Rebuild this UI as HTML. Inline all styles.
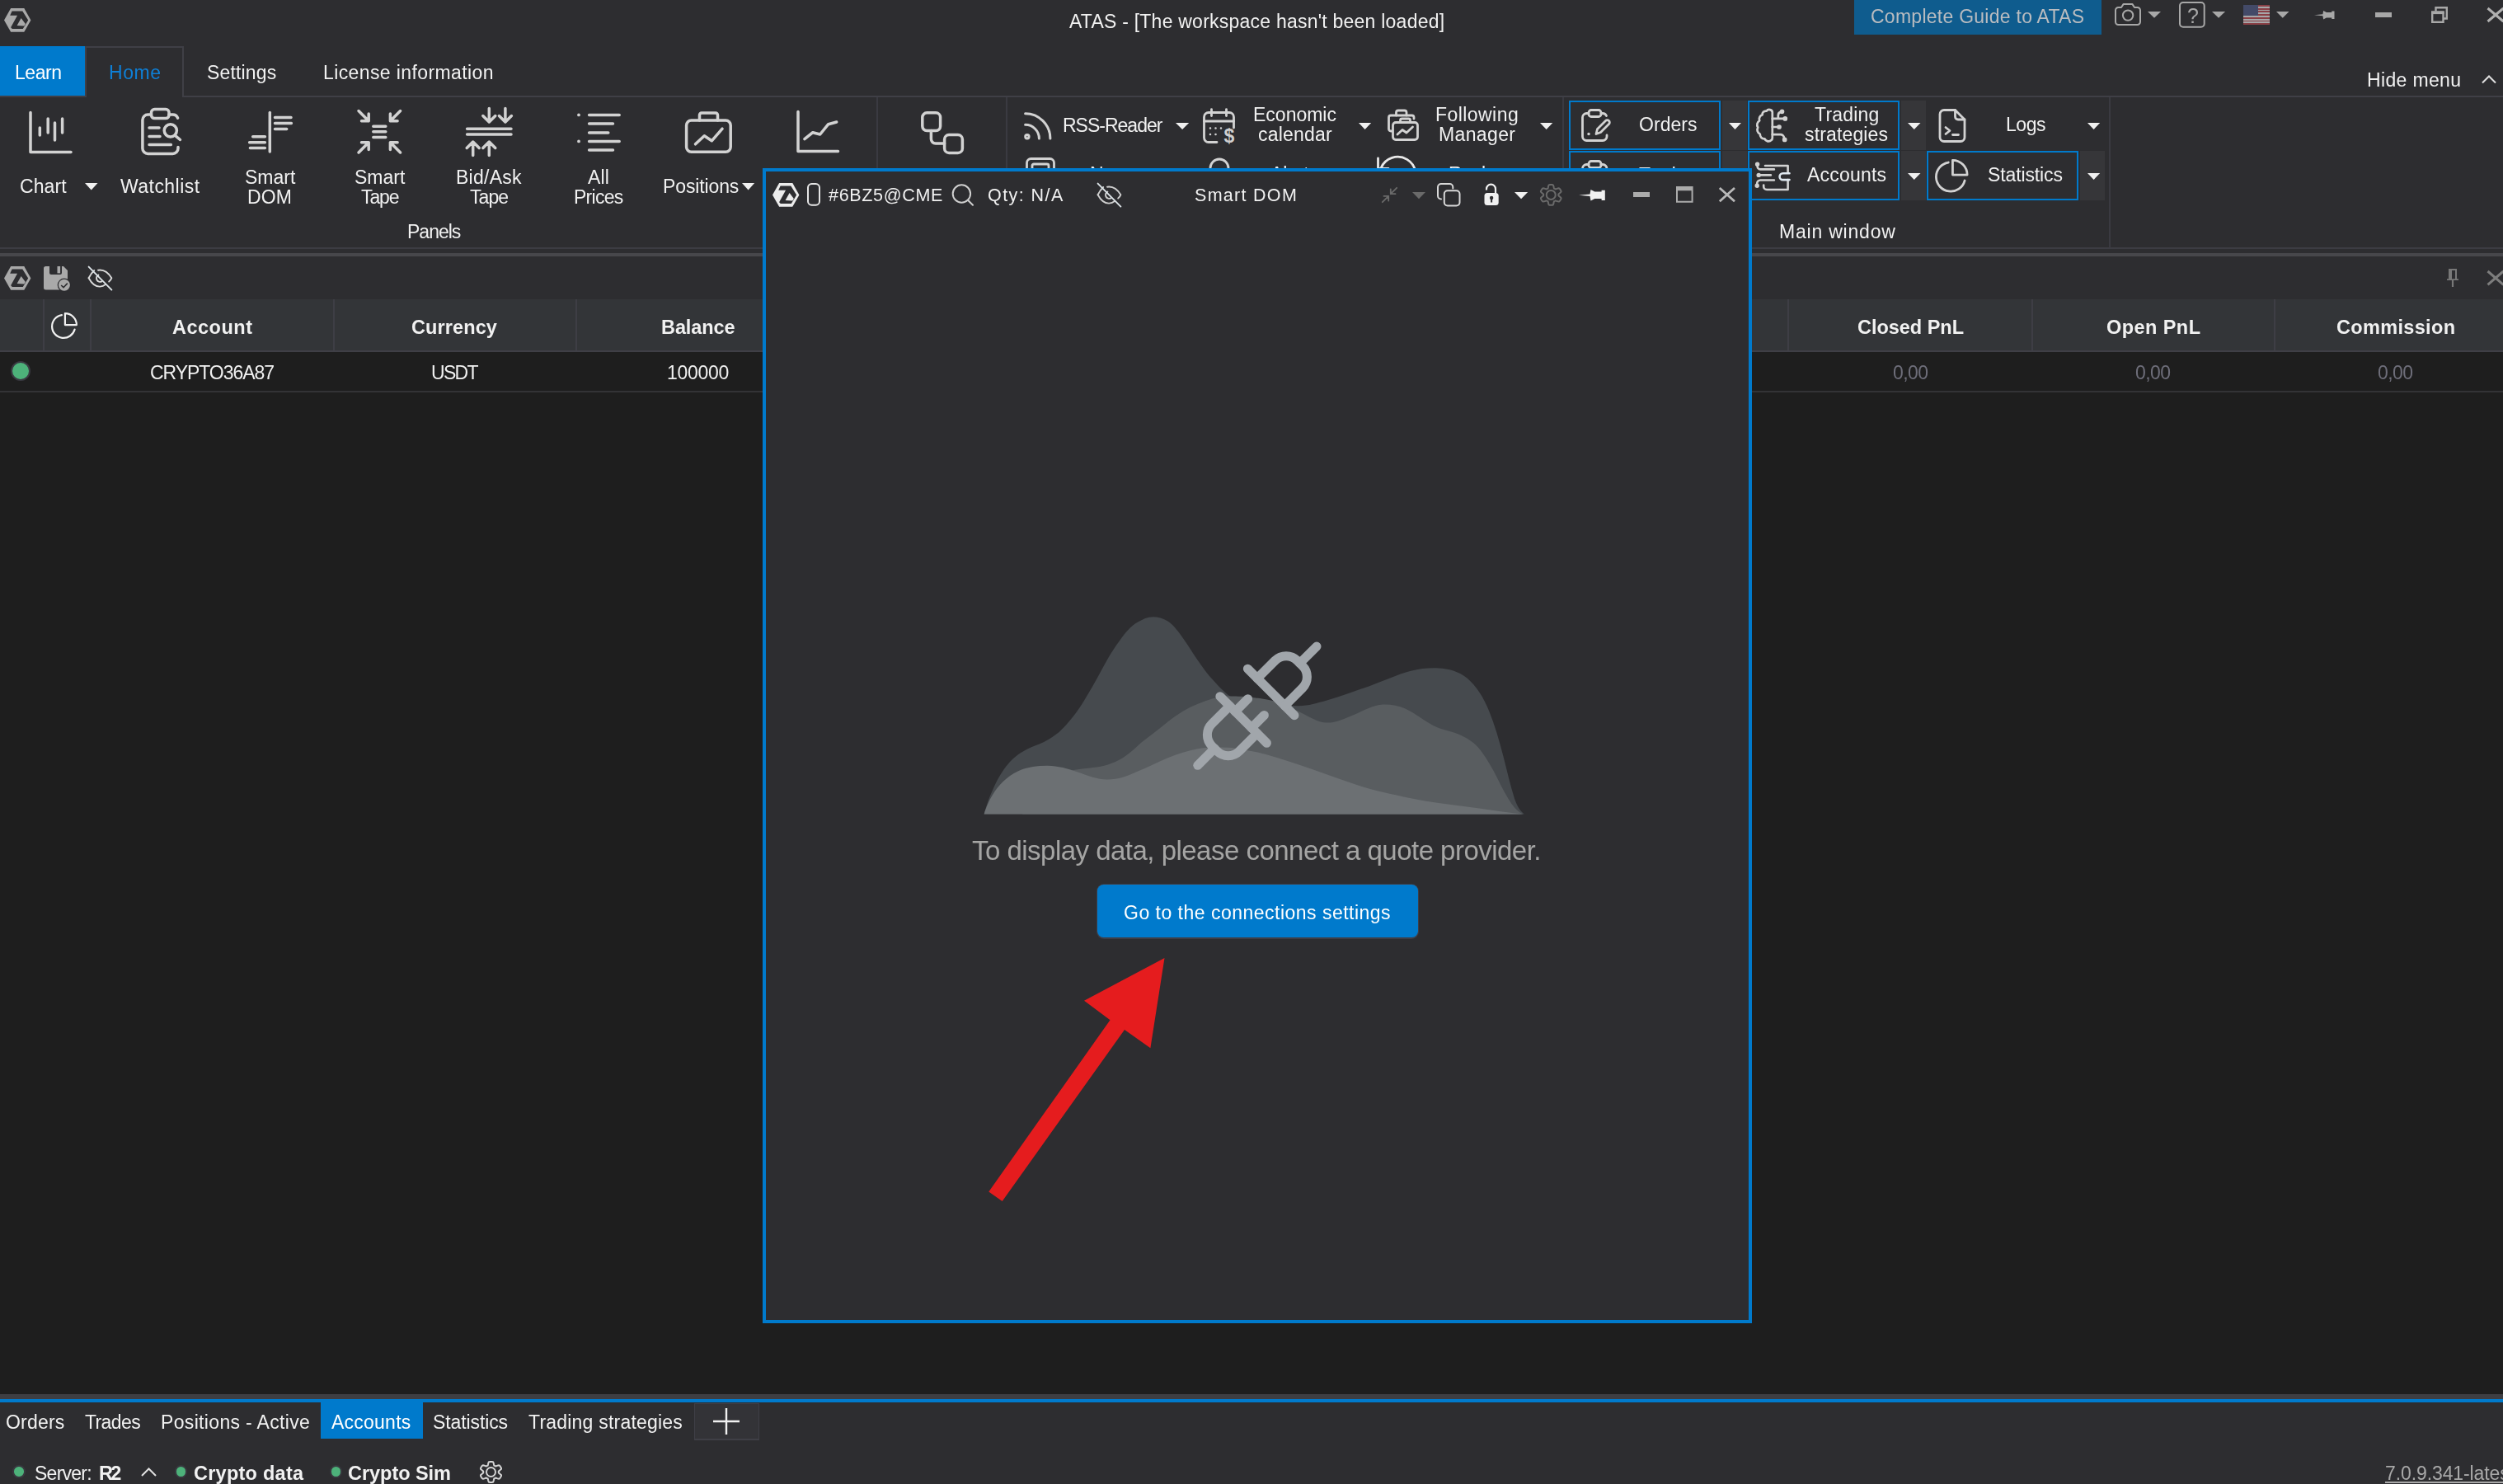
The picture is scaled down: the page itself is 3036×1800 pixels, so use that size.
<!DOCTYPE html>
<html><head><meta charset="utf-8"><title>ATAS</title><style>
html,body{margin:0;padding:0;background:#2d2d30;}
body{width:3036px;height:1800px;position:relative;overflow:hidden;font-family:"Liberation Sans",sans-serif;}
body div,body span,body svg{position:absolute;display:block;box-sizing:content-box;}
span{white-space:pre;line-height:1;will-change:transform;}
svg{overflow:visible;}
</style></head><body>
<div style="left:2249px;top:0px;width:300px;height:42px;background:#0f5c8e;"></div>
<span style="left:2269.0px;top:8.5px;font-size:23px;letter-spacing:0.26px;color:#b9bcc0;">Complete Guide to ATAS</span>
<span style="left:1297.0px;top:14.5px;font-size:23px;letter-spacing:0.23px;color:#f1f1f1;">ATAS - [The workspace hasn&#x27;t been loaded]</span>
<div style="left:0px;top:56px;width:103px;height:60px;background:#007acc;"></div>
<span style="left:18.0px;top:76.5px;font-size:23px;letter-spacing:-0.45px;color:#ffffff;">Learn</span>
<div style="left:103px;top:56px;width:120px;height:2px;background:#3f3f46;"></div>
<div style="left:221px;top:56px;width:2px;height:62px;background:#3f3f46;"></div>
<div style="left:103px;top:56px;width:2px;height:62px;background:#3f3f46;"></div>
<div style="left:0px;top:116px;width:105px;height:2px;background:#3f3f46;"></div>
<div style="left:221px;top:116px;width:2815px;height:2px;background:#3f3f46;"></div>
<span style="left:132.0px;top:76.5px;font-size:23px;letter-spacing:0.55px;color:#0e7fd6;">Home</span>
<span style="left:251.3px;top:76.5px;font-size:23px;letter-spacing:0.17px;color:#f1f1f1;">Settings</span>
<span style="left:392.2px;top:76.5px;font-size:23px;letter-spacing:0.39px;color:#f1f1f1;">License information</span>
<span style="left:2871.0px;top:86.1px;font-size:23px;letter-spacing:0.35px;color:#f1f1f1;">Hide menu</span>
<svg style="left:3010px;top:91px;" width="18" height="10" viewBox="0 0 18 10"><path d="M1 9.5L9 1.5L17 9.5" fill="none" stroke="#e0e0e0" stroke-width="2"/></svg>
<div style="left:0px;top:300px;width:3036px;height:2px;background:#3c3c43;"></div>
<div style="left:0px;top:307px;width:3036px;height:4px;background:#47474b;"></div>
<div style="left:1063px;top:118px;width:2px;height:182px;background:#3a3a41;"></div>
<div style="left:1220px;top:118px;width:2px;height:182px;background:#3a3a41;"></div>
<div style="left:1895px;top:118px;width:2px;height:182px;background:#3a3a41;"></div>
<div style="left:2558px;top:118px;width:2px;height:182px;background:#3a3a41;"></div>
<span style="left:23.7px;top:215.0px;font-size:23px;letter-spacing:0.09px;color:#f1f1f1;">Chart</span>
<svg style="left:102.5px;top:222.4px;" width="15.5" height="8.599999999999994" viewBox="0 0 15.5 8.599999999999994"><path d="M0 0H15.5L7.75 8.599999999999994Z" fill="#f1f1f1"/></svg>
<span style="left:146.0px;top:215.0px;font-size:23px;letter-spacing:0.45px;color:#f1f1f1;">Watchlist</span>
<span style="left:296.6px;top:203.7px;font-size:23px;letter-spacing:-0.01px;color:#f1f1f1;">Smart</span>
<span style="left:299.8px;top:227.5px;font-size:23px;letter-spacing:0.17px;color:#f1f1f1;">DOM</span>
<span style="left:429.6px;top:203.7px;font-size:23px;letter-spacing:-0.01px;color:#f1f1f1;">Smart</span>
<span style="left:437.7px;top:227.5px;font-size:23px;letter-spacing:-1.12px;color:#f1f1f1;">Tape</span>
<span style="left:553.2px;top:203.7px;font-size:23px;letter-spacing:0.27px;color:#f1f1f1;">Bid/Ask</span>
<span style="left:569.8px;top:227.5px;font-size:23px;letter-spacing:-0.92px;color:#f1f1f1;">Tape</span>
<span style="left:712.7px;top:203.7px;font-size:23px;letter-spacing:0.17px;color:#f1f1f1;">All</span>
<span style="left:696.0px;top:227.5px;font-size:23px;letter-spacing:-0.74px;color:#f1f1f1;">Prices</span>
<span style="left:803.9px;top:215.0px;font-size:23px;letter-spacing:-0.12px;color:#f1f1f1;">Positions</span>
<svg style="left:900.3px;top:222.4px;" width="15.200000000000045" height="8.599999999999994" viewBox="0 0 15.200000000000045 8.599999999999994"><path d="M0 0H15.200000000000045L7.600000000000023 8.599999999999994Z" fill="#f1f1f1"/></svg>
<span style="left:494.0px;top:270.1px;font-size:23px;letter-spacing:-1.00px;color:#f1f1f1;">Panels</span>
<span style="left:2158.0px;top:270.0px;font-size:23px;letter-spacing:0.79px;color:#f1f1f1;">Main window</span>
<span style="left:1289.0px;top:140.5px;font-size:23px;letter-spacing:-1.00px;color:#f1f1f1;">RSS-Reader</span>
<svg style="left:1425.6px;top:149px;" width="16.200000000000045" height="8" viewBox="0 0 16.200000000000045 8"><path d="M0 0H16.200000000000045L8.100000000000023 8Z" fill="#f1f1f1"/></svg>
<span style="left:1520.0px;top:127.9px;font-size:23px;letter-spacing:0.00px;color:#f1f1f1;">Economic</span>
<span style="left:1526.0px;top:152.1px;font-size:23px;letter-spacing:0.20px;color:#f1f1f1;">calendar</span>
<svg style="left:1647.6px;top:149px;" width="15.200000000000045" height="8" viewBox="0 0 15.200000000000045 8"><path d="M0 0H15.200000000000045L7.600000000000023 8Z" fill="#f1f1f1"/></svg>
<span style="left:1741.0px;top:127.9px;font-size:23px;letter-spacing:0.44px;color:#f1f1f1;">Following</span>
<span style="left:1745.0px;top:152.1px;font-size:23px;letter-spacing:0.37px;color:#f1f1f1;">Manager</span>
<svg style="left:1868.4px;top:149px;" width="15.299999999999955" height="8" viewBox="0 0 15.299999999999955 8"><path d="M0 0H15.299999999999955L7.649999999999977 8Z" fill="#f1f1f1"/></svg>
<div style="left:1903px;top:122px;width:180px;height:56px;border:2px solid #007acc;background:transparent;"></div>
<span style="left:1987.6px;top:139.5px;font-size:23px;letter-spacing:0.06px;color:#f1f1f1;">Orders</span>
<div style="left:2089px;top:122px;width:30px;height:60px;background:#363639;"></div>
<svg style="left:2097px;top:149px;" width="15" height="8" viewBox="0 0 15 8"><path d="M0 0H15L7.5 8Z" fill="#f1f1f1"/></svg>
<div style="left:1903px;top:183px;width:180px;height:56px;border:2px solid #007acc;background:transparent;"></div>
<span style="left:1988.0px;top:201.1px;font-size:23px;letter-spacing:-0.54px;color:#f1f1f1;">Trades</span>
<div style="left:2089px;top:183px;width:30px;height:60px;background:#363639;"></div>
<svg style="left:2097px;top:210px;" width="15" height="8" viewBox="0 0 15 8"><path d="M0 0H15L7.5 8Z" fill="#f1f1f1"/></svg>
<div style="left:2120px;top:122px;width:180px;height:56px;border:2px solid #007acc;background:transparent;"></div>
<span style="left:2200.8px;top:127.9px;font-size:23px;letter-spacing:0.18px;color:#f1f1f1;">Trading</span>
<span style="left:2189.4px;top:152.1px;font-size:23px;letter-spacing:0.15px;color:#f1f1f1;">strategies</span>
<div style="left:2306px;top:122px;width:30px;height:60px;background:#363639;"></div>
<svg style="left:2314px;top:149px;" width="15.5" height="8" viewBox="0 0 15.5 8"><path d="M0 0H15.5L7.75 8Z" fill="#f1f1f1"/></svg>
<span style="left:2432.7px;top:139.5px;font-size:23px;letter-spacing:-0.46px;color:#f1f1f1;">Logs</span>
<svg style="left:2531.5px;top:149px;" width="15.199999999999818" height="8" viewBox="0 0 15.199999999999818 8"><path d="M0 0H15.199999999999818L7.599999999999909 8Z" fill="#f1f1f1"/></svg>
<div style="left:2120px;top:183px;width:180px;height:56px;border:2px solid #007acc;background:transparent;"></div>
<span style="left:2192.0px;top:201.1px;font-size:23px;letter-spacing:0.20px;color:#f1f1f1;">Accounts</span>
<div style="left:2306px;top:183px;width:30px;height:60px;background:#363639;"></div>
<svg style="left:2314px;top:210px;" width="15.5" height="8" viewBox="0 0 15.5 8"><path d="M0 0H15.5L7.75 8Z" fill="#f1f1f1"/></svg>
<div style="left:2337px;top:183px;width:180px;height:56px;border:2px solid #007acc;background:transparent;"></div>
<span style="left:2411.4px;top:201.1px;font-size:23px;letter-spacing:-0.12px;color:#f1f1f1;">Statistics</span>
<div style="left:2523px;top:183px;width:30px;height:60px;background:#363639;"></div>
<svg style="left:2531.5px;top:210px;" width="15.199999999999818" height="8" viewBox="0 0 15.199999999999818 8"><path d="M0 0H15.199999999999818L7.599999999999909 8Z" fill="#f1f1f1"/></svg>
<span style="left:1322.0px;top:199.5px;font-size:23px;letter-spacing:-0.50px;color:#f1f1f1;">News</span>
<span style="left:1541.0px;top:199.5px;font-size:23px;letter-spacing:-0.16px;color:#f1f1f1;">Alerts</span>
<span style="left:1757.0px;top:199.5px;font-size:23px;letter-spacing:-0.72px;color:#f1f1f1;">Replay</span>
<div style="left:0px;top:363px;width:3036px;height:62px;background:#333538;"></div>
<div style="left:0px;top:425px;width:3036px;height:2px;background:#3f3f46;"></div>
<div style="left:0px;top:427px;width:3036px;height:1264px;background:#1e1e1e;"></div>
<div style="left:0px;top:473.5px;width:3036px;height:2px;background:#333336;"></div>
<div style="left:52px;top:363px;width:2px;height:62px;background:#3e3e45;"></div>
<div style="left:109px;top:363px;width:2px;height:62px;background:#3e3e45;"></div>
<div style="left:403.5px;top:363px;width:2px;height:62px;background:#3e3e45;"></div>
<div style="left:697.6px;top:363px;width:2px;height:62px;background:#3e3e45;"></div>
<div style="left:2168.4px;top:363px;width:2px;height:62px;background:#3e3e45;"></div>
<div style="left:2463.5px;top:363px;width:2px;height:62px;background:#3e3e45;"></div>
<div style="left:2758.2px;top:363px;width:2px;height:62px;background:#3e3e45;"></div>
<span style="left:209.0px;top:385.5px;font-size:23.5px;letter-spacing:0.50px;color:#f1f1f1;font-weight:700;">Account</span>
<span style="left:499.4px;top:385.5px;font-size:23.5px;letter-spacing:0.10px;color:#f1f1f1;font-weight:700;">Currency</span>
<span style="left:801.6px;top:385.5px;font-size:23.5px;letter-spacing:-0.09px;color:#f1f1f1;font-weight:700;">Balance</span>
<span style="left:2253.3px;top:385.5px;font-size:23.5px;letter-spacing:-0.03px;color:#f1f1f1;font-weight:700;">Closed PnL</span>
<span style="left:2555.0px;top:385.5px;font-size:23.5px;letter-spacing:0.43px;color:#f1f1f1;font-weight:700;">Open PnL</span>
<span style="left:2834.0px;top:385.5px;font-size:23.5px;letter-spacing:0.33px;color:#f1f1f1;font-weight:700;">Commission</span>
<span style="left:182.0px;top:440.5px;font-size:23px;letter-spacing:-1.05px;color:#f1f1f1;">CRYPTO36A87</span>
<span style="left:523.3px;top:440.5px;font-size:23px;letter-spacing:-1.67px;color:#f1f1f1;">USDT</span>
<span style="left:809.3px;top:440.5px;font-size:23px;letter-spacing:-0.31px;color:#f1f1f1;">100000</span>
<span style="left:2295.6px;top:440.5px;font-size:23px;letter-spacing:-0.59px;color:#6e6e7a;">0,00</span>
<span style="left:2590.4px;top:440.5px;font-size:23px;letter-spacing:-0.59px;color:#6e6e7a;">0,00</span>
<span style="left:2884.3px;top:440.5px;font-size:23px;letter-spacing:-0.59px;color:#6e6e7a;">0,00</span>
<div style="left:13px;top:438px;width:20px;height:20px;border-radius:50%;background:#4db27a;border:2px solid #3a3a42"></div>
<div style="left:0px;top:1691px;width:3036px;height:6px;background:#3e3e42;"></div>
<div style="left:0px;top:1697px;width:3036px;height:4px;background:#007acc;"></div>
<div style="left:0px;top:1701px;width:3036px;height:99px;background:#2d2d30;"></div>
<div style="left:389px;top:1701px;width:124px;height:44px;background:#007acc;"></div>
<span style="left:7.0px;top:1713.5px;font-size:23px;letter-spacing:0.20px;color:#f1f1f1;">Orders</span>
<span style="left:103.0px;top:1713.5px;font-size:23px;letter-spacing:-0.62px;color:#f1f1f1;">Trades</span>
<span style="left:195.4px;top:1713.5px;font-size:23px;letter-spacing:0.34px;color:#f1f1f1;">Positions - Active</span>
<span style="left:401.5px;top:1713.5px;font-size:23px;letter-spacing:0.24px;color:#ffffff;">Accounts</span>
<span style="left:525.4px;top:1713.5px;font-size:23px;letter-spacing:-0.10px;color:#f1f1f1;">Statistics</span>
<span style="left:641.0px;top:1713.5px;font-size:23px;letter-spacing:0.21px;color:#f1f1f1;">Trading strategies</span>
<div style="left:841.5px;top:1701.5px;width:79.5px;height:45px;background:#3f3f46;"></div>
<div style="left:843px;top:1703px;width:76.5px;height:42px;background:#333337;"></div>
<svg style="left:865px;top:1708px;" width="32" height="32" viewBox="0 0 32 32"><path d="M16 0V32M0 16H32" stroke="#f1f1f1" stroke-width="2.4" fill="none"/></svg>
<div style="left:15.3px;top:1777.2px;width:11.4px;height:11.4px;border-radius:50%;background:#4db27a;border:2px solid #38383f"></div>
<div style="left:211.8px;top:1777.2px;width:11.4px;height:11.4px;border-radius:50%;background:#4db27a;border:2px solid #38383f"></div>
<div style="left:400px;top:1777.2px;width:11.4px;height:11.4px;border-radius:50%;background:#4db27a;border:2px solid #38383f"></div>
<span style="left:41.6px;top:1775.9px;font-size:23px;letter-spacing:-0.75px;color:#f1f1f1;">Server:</span>
<span style="left:120.0px;top:1775.5px;font-size:23.5px;letter-spacing:-2.64px;color:#f1f1f1;font-weight:700;">R2</span>
<svg style="left:170.6px;top:1779.5px;" width="19" height="11" viewBox="0 0 19 11"><path d="M1 10L9.5 1.5L18 10" fill="none" stroke="#e0e0e0" stroke-width="2"/></svg>
<span style="left:234.5px;top:1775.5px;font-size:23.5px;letter-spacing:0.25px;color:#f1f1f1;font-weight:700;">Crypto data</span>
<span style="left:422.3px;top:1775.5px;font-size:23.5px;letter-spacing:-0.04px;color:#f1f1f1;font-weight:700;">Crypto Sim</span>
<span style="left:2893.0px;top:1776.0px;font-size:23px;letter-spacing:-0.10px;color:#a8a8a8;text-decoration:underline;text-underline-offset:2px;">7.0.9.341-latest</span>
<svg style="left:4.8px;top:9.8px;" width="32.4" height="28.8" viewBox="0 0 32.4 28.8"><polygon points="0,14.4 8.1,0 24.3,0 32.4,14.4 24.3,28.8 8.1,28.8" fill="#a9a9a9"/><polygon points="9.6,3.4 22.3,3.4 29.2,14.4 22.8,25 9.8,25 8.1,23.3 16.05,8.65 7.2,8.65" fill="#2d2d30"/><polygon points="20.6,12 15.6,21.1 24.3,21.6 25.9,19" fill="#a9a9a9"/></svg>
<svg style="left:4.8px;top:323px;" width="32.4" height="28.8" viewBox="0 0 32.4 28.8"><polygon points="0,14.4 8.1,0 24.3,0 32.4,14.4 24.3,28.8 8.1,28.8" fill="#a9a9a9"/><polygon points="9.6,3.4 22.3,3.4 29.2,14.4 22.8,25 9.8,25 8.1,23.3 16.05,8.65 7.2,8.65" fill="#2d2d30"/><polygon points="20.6,12 15.6,21.1 24.3,21.6 25.9,19" fill="#a9a9a9"/></svg>
<svg style="left:34.8px;top:134.5px;" width="53" height="52" viewBox="0 0 53 52"><g fill="none" stroke="#d2d2d2" stroke-width="3.5" stroke-linecap="round" stroke-linejoin="round"><path d="M2 1.6V49.6H51"/><path d="M13.3 20V29M23.2 9V26M31.5 14V35M40.6 9V26"/></g></svg>
<svg style="left:170.8px;top:131.4px;" width="50" height="58" viewBox="0 0 50 58"><g fill="none" stroke="#d2d2d2" stroke-width="3.5" stroke-linecap="round" stroke-linejoin="round"><rect x="12.5" y="1.6" width="21.5" height="11" rx="4"/><path d="M12.5 8H8.4A6.5 6.5 0 0 0 1.9 14.5V49A6.5 6.5 0 0 0 8.4 55.5H38.5A6.5 6.5 0 0 0 45 49V47.5M34 8H38.5A6.5 6.5 0 0 1 44.6 12.2"/><path d="M10 24H22M10 34.4H23M10 44.5H36.4"/><circle cx="35.8" cy="27.3" r="7.6"/><path d="M41.4 33.4L47.5 38.5"/></g></svg>
<svg style="left:300.6px;top:135px;" width="54" height="51" viewBox="0 0 54 51"><g fill="none" stroke="#d2d2d2" stroke-width="3.5" stroke-linecap="round" stroke-linejoin="round"><path d="M26.3 1.6V49"/><path d="M32.5 7.5H52M32.5 14.6H52.4M32.5 21.6H46.7M5.7 30.7H20.4M1.6 37.8H20.4M2.4 44.5H20.4"/></g></svg>
<svg style="left:432.7px;top:133.4px;" width="55" height="55" viewBox="0 0 55 55"><g fill="none" stroke="#d2d2d2" stroke-width="3.5" stroke-linecap="round" stroke-linejoin="round"><path d="M2 1.6L14.2 13.7M14.2 5V13.7H5.5"/><path d="M52.6 1.6L40.4 13.7M40.4 5V13.7H49.1"/><path d="M2 52L14.2 39.8M14.2 48.5V39.8H5.5"/><path d="M52.6 52L40.4 39.8M40.4 48.5V39.8H49.1"/><path d="M19.8 20.2H34.8M19.8 26.8H34.8M19.8 33.4H34.8"/></g></svg>
<svg style="left:564.7px;top:130.4px;" width="57" height="60" viewBox="0 0 57 60"><g fill="none" stroke="#d2d2d2" stroke-width="3.5" stroke-linecap="round" stroke-linejoin="round"><path d="M1.6 26.3H55M1.6 33H55"/><path d="M28.3 1.6V17.5M20.8 10.5L28.3 18L35.8 10.5M47.9 1.6V17.5M40.4 10.5L47.9 18L55.4 10.5"/><path d="M8.7 58.5V42.5M1.2 49.5L8.7 42L16.2 49.5M28.3 58.5V42.5M20.8 49.5L28.3 42L35.8 49.5"/></g></svg>
<svg style="left:699.8px;top:136.5px;" width="53" height="48" viewBox="0 0 53 48"><g fill="none" stroke="#d2d2d2" stroke-width="3.5" stroke-linecap="round" stroke-linejoin="round"><path d="M14.6 2.4H51.2M14.6 13.1H43.5M14.6 23.9H37.8M14.6 34.4H51.2M14.6 45.1H43.5"/><path d="M2 2.4H2.01M2 34.4H2.01" stroke-width="3.8"/></g></svg>
<svg style="left:830.6px;top:135px;" width="57" height="51" viewBox="0 0 57 51"><g fill="none" stroke="#d2d2d2" stroke-width="3.5" stroke-linecap="round" stroke-linejoin="round"><rect x="1.6" y="11" width="53.6" height="38.2" rx="6"/><path d="M17.5 11V4.5A2.5 2.5 0 0 1 20 2H37A2.5 2.5 0 0 1 39.5 4.5V11"/><path d="M12.5 39.8L23.3 29.7L32.3 35.8L45.1 21.2"/></g></svg>
<svg style="left:966px;top:134px;" width="52" height="51" viewBox="0 0 52 51"><g fill="none" stroke="#d2d2d2" stroke-width="3.5" stroke-linecap="round" stroke-linejoin="round"><path d="M2 1.6V49.6H50.5"/><path d="M9.9 34.7L19.9 26.7L28.7 29L38.7 16.7L48.7 14"/></g></svg>
<svg style="left:1117px;top:134.5px;" width="53" height="52" viewBox="0 0 53 52"><g fill="none" stroke="#d2d2d2" stroke-width="3.5" stroke-linecap="round" stroke-linejoin="round"><rect x="1.8" y="1.8" width="21.8" height="21.8" rx="5.5"/><rect x="28.6" y="28.6" width="21.8" height="21.8" rx="5.5"/><path d="M12.4 23.6V33.5A5.5 5.5 0 0 0 17.9 39H28.6"/></g></svg>
<svg style="left:1241.6px;top:135.5px;" width="34" height="34" viewBox="0 0 34 34"><g fill="none" stroke="#d2d2d2" stroke-width="3" stroke-linecap="round" stroke-linejoin="round"><circle cx="3.9" cy="29.8" r="2.2"/><path d="M1.6 15.3A16.8 16.8 0 0 1 18.4 32.1"/><path d="M1.6 1.8A30.3 30.3 0 0 1 31.9 32.1"/></g></svg>
<svg style="left:1459.3px;top:131px;" width="40" height="44" viewBox="0 0 40 44"><g fill="none" stroke="#d2d2d2" stroke-width="2.8" stroke-linecap="round" stroke-linejoin="round"><path d="M37.5 24V11A5.5 5.5 0 0 0 32 5.5H7A5.5 5.5 0 0 0 1.5 11V36A5.5 5.5 0 0 0 7 41.5H17"/><path d="M10.5 1.6V9.5M28.5 1.6V9.5M1.5 16H37.5"/><path d="M9 24.5H9.01M15.5 24.5H15.51M22 24.5H22.01M9 32H9.01M15.5 32H15.51" stroke-width="2.6"/><text x="32" y="41.5" text-anchor="middle" font-family="Liberation Sans, sans-serif" font-size="23" font-weight="700" fill="#cfcfcf" stroke="none">$</text></g></svg>
<svg style="left:1683px;top:132.4px;" width="38" height="39" viewBox="0 0 38 39"><g fill="none" stroke="#d2d2d2" stroke-width="2.8" stroke-linecap="round" stroke-linejoin="round"><path d="M5 27H4A2.5 2.5 0 0 1 1.5 24.5V10.5A2.5 2.5 0 0 1 4 8H29.500A2.5 2.5 0 0 1 32 10.500V12"/><path d="M10.5 8V4.5A2.5 2.5 0 0 1 13 2H20.500A2.5 2.5 0 0 1 23 4.500V8"/><rect x="6.5" y="16.5" width="30" height="21" rx="3.5"/><path d="M15.5 16.500V14A2 2 0 0 1 17.5 12H25.500A2 2 0 0 1 27.5 14V16.5"/><path d="M12 31L18 25.500L23 29L30.5 22"/></g></svg>
<svg style="left:1917.5px;top:132.4px;" width="36" height="40" viewBox="0 0 36 40"><g fill="none" stroke="#d2d2d2" stroke-width="2.8" stroke-linecap="round" stroke-linejoin="round"><rect x="9" y="1.5" width="15" height="8" rx="3"/><path d="M9 5.5H6.500A5 5 0 0 0 1.5 10.500V33.500A5 5 0 0 0 6.5 38.500H26A5 5 0 0 0 31 33.500V32M24 5.500H26A5 5 0 0 1 30.5 8.5"/><path d="M9 30.500H9.010" stroke-width="3.4"/><path d="M18 30.500L19.5 24.500L29.5 14.500A2.8 2.8 0 0 1 33.5 18.500L23.5 28.500Z"/></g></svg>
<svg style="left:1917.5px;top:194px;" width="36" height="40" viewBox="0 0 36 40"><g fill="none" stroke="#d2d2d2" stroke-width="2.8" stroke-linecap="round" stroke-linejoin="round"><rect x="9" y="1.5" width="15" height="8" rx="3"/><path d="M9 5.5H6.500A5 5 0 0 0 1.5 10.500V33.500A5 5 0 0 0 6.5 38.500H26A5 5 0 0 0 31 33.500V10.500A5 5 0 0 0 26 5.500H24"/></g></svg>
<svg style="left:2130.1px;top:131.9px;" width="38" height="41" viewBox="0 0 38 41"><g fill="none" stroke="#d2d2d2" stroke-width="2.7" stroke-linecap="round" stroke-linejoin="round"><path d="M19.8 4.200C19.8 0.8 14.5 -0.2 12.8 2.600C9.5 2.2 7.3 4.6 7.7 7.200C4.6 8.2 3 11.4 4.2 14.300C1.3 16 0.4 19.8 2.2 22.600C0.6 25.5 1.7 29.3 4.8 30.700C4.6 34.2 7.4 36.6 10.4 36.300C11.5 39.6 16.3 40.4 18.3 38.200C19.4 37.4 19.8 36.4 19.8 35.200Z"/><path d="M19.8 11.900H34.500M26.8 11.900V8A4.5 4.5 0 0 1 30.5 3.600M19.8 22H27M19.8 31.200H29.500A4.5 4.5 0 0 1 34 35.200V36.5"/><circle cx="31.5" cy="3.3" r="1.5" fill="#cfcfcf"/><circle cx="35.3" cy="11.9" r="1.5" fill="#cfcfcf"/><circle cx="28" cy="22" r="1.5" fill="#cfcfcf"/><circle cx="34.7" cy="37.4" r="1.5" fill="#cfcfcf"/></g></svg>
<svg style="left:2351px;top:131.8px;" width="34" height="41" viewBox="0 0 34 41"><g fill="none" stroke="#d2d2d2" stroke-width="2.8" stroke-linecap="round" stroke-linejoin="round"><path d="M20.5 1.500H7A5 5 0 0 0 2 6.500V34.500A5 5 0 0 0 7 39.500H27A5 5 0 0 0 32 34.500V13Z"/><path d="M20.5 1.500V9.500A3.5 3.5 0 0 0 24 13H32"/><path d="M9 22.500L14 26.500L9 30.500M17.5 31.500H24.5"/></g></svg>
<svg style="left:2129.2px;top:196.5px;" width="43" height="36" viewBox="0 0 43 36"><g fill="none" stroke="#d2d2d2" stroke-width="2.6" stroke-linecap="round" stroke-linejoin="round"><path d="M2.6 2.500V4.400A4 4 0 0 0 6.6 8.400H22.900M4.4 15.400H18.900M2.2 28V25.500A4 4 0 0 1 6.2 21.500H22.9"/><circle cx="2.6" cy="2.3" r="1.4" fill="#cfcfcf"/><circle cx="4.2" cy="15.4" r="1.4" fill="#cfcfcf"/><circle cx="2.2" cy="28.3" r="1.4" fill="#cfcfcf"/><path d="M12 4H39.600V12.300M39.6 21.100V33H14A3.8 3.8 0 0 1 10.2 29.200V27.5"/><path d="M41.5 13.300H33.500A3.9 3.9 0 0 0 33.5 21.100H41.5" stroke="#dfe8f0"/></g></svg>
<svg style="left:2347.3px;top:193px;" width="40.5" height="40.5" viewBox="0 0 40.5 40.5"><g fill="none" stroke="#d2d2d2" stroke-width="2.8" stroke-linecap="round" stroke-linejoin="round"><path d="M16.29 4.02A17.65 17.65 0 1 0 36.10 26.02"/><path d="M21.45 1.40V19.05H39.10A17.65 17.65 0 0 0 21.45 1.40Z"/></g></svg>
<svg style="left:61.7px;top:378.7px;" width="32" height="32" viewBox="0 0 32 32"><g fill="none" stroke="#f1f1f1" stroke-width="2.2" stroke-linecap="round" stroke-linejoin="round"><path d="M12.91 3.07A14.00 14.00 0 1 0 28.62 20.52"/><path d="M16.90 1.10V15.10H30.90A14.00 14.00 0 0 0 16.90 1.10Z"/></g></svg>
<svg style="left:106.6px;top:322.8px;" width="29" height="29" viewBox="0 0 29 29"><g fill="none" stroke="#d9d9d9" stroke-width="1.9" stroke-linecap="round" stroke-linejoin="round"><path d="M0.6 14.2Q3.5 8.5 7.2 5"/><path d="M12 4.7Q21.5 3.2 28.4 14.2Q27.4 16.9 25.2 18.6"/><path d="M0.6 14.2Q6.5 25 14.4 24.6Q18 24.4 21 22"/><path d="M12.4 10.6A4.2 4.2 0 0 0 16.4 18.4"/><path d="M0.6 0.6L28.4 28.6" stroke="#dde4e8"/></g></svg>
<svg style="left:53px;top:322.8px;" width="33" height="33" viewBox="0 0 33 33"><path d="M2.5 0H7V8A2 2 0 0 0 9 10H20A2 2 0 0 0 22 8V0H24L29 5V26A2.5 2.5 0 0 1 26.5 28.500H2.500A2.5 2.5 0 0 1 0 26V2.500A2.5 2.5 0 0 1 2.5 0Z" fill="#a9a9a9"/><rect x="16.5" y="0" width="3.6" height="8.4" fill="#a9a9a9"/><circle cx="24.9" cy="22.8" r="8.2" fill="#2d2d30"/><circle cx="24.9" cy="22.8" r="7" fill="#a9a9a9"/><path d="M21.2 23L24 25.700L28.8 20.6" fill="none" stroke="#2d2d30" stroke-width="1.6"/></svg>
<svg style="left:2968px;top:326px;" width="15" height="22" viewBox="0 0 15 22"><path d="M2 0H12V12.200H14V14H8.100V22H5.900V14H0V12.200H2Z M6 2V12.200H10V2Z" fill="#787878" fill-rule="evenodd"/></svg>
<svg style="left:3017px;top:329px;" width="20" height="16.4" viewBox="0 0 20 16.4"><path d="M0.5 0L19.5 16.400M19.5 0L0.5 16.4" stroke="#7d7d7d" stroke-width="3" fill="none"/></svg>
<svg style="left:2565px;top:4.3px;" width="33" height="27" viewBox="0 0 33 27"><g fill="none" stroke="#a8a8a8" stroke-width="2" stroke-linecap="round" stroke-linejoin="round"><path d="M4.5 5H8L10.5 1.100H21.500L24 5H27.500A3.5 3.5 0 0 1 31 8.500V22.500A3.5 3.5 0 0 1 27.5 26H4.500A3.5 3.5 0 0 1 1 22.500V8.500A3.5 3.5 0 0 1 4.5 5Z"/><circle cx="16.1" cy="14.6" r="6.2"/></g></svg>
<svg style="left:2605px;top:14px;" width="16" height="7.699999999999999" viewBox="0 0 16 7.699999999999999"><path d="M0 0H16L8.0 7.699999999999999Z" fill="#a8a8a8"/></svg>
<svg style="left:2643.2px;top:2.3px;" width="32" height="32" viewBox="0 0 32 32"><g fill="none" stroke="#a8a8a8" stroke-width="2" stroke-linecap="round" stroke-linejoin="round"><rect x="1" y="1" width="29.7" height="29.7" rx="4"/></g></svg>
<span style="left:2652.500px;top:6.500px;font-size:25px;color:#a8a8a8">?</span>
<svg style="left:2683px;top:14px;" width="16.09999999999991" height="7.699999999999999" viewBox="0 0 16.09999999999991 7.699999999999999"><path d="M0 0H16.09999999999991L8.049999999999955 7.699999999999999Z" fill="#a8a8a8"/></svg>
<div style="left:2721px;top:6.200px;width:32.400px;height:24px;background:repeating-linear-gradient(#8a4046 0,#8a4046 1.850px,#a6a6a8 1.850px,#a6a6a8 3.700px)"></div>
<div style="left:2721px;top:6.200px;width:18.400px;height:12.900px;background:#434a68"></div>
<svg style="left:2761.3px;top:14px;" width="15.5" height="7.699999999999999" viewBox="0 0 15.5 7.699999999999999"><path d="M0 0H15.5L7.75 7.699999999999999Z" fill="#a8a8a8"/></svg>
<svg style="left:2806.7px;top:13.2px;" width="24.5" height="10.5" viewBox="0 0 31.8 13.6"><path d="M0 6.800L13.5 5.600L14.5 0L19.3 2.600H27.600V0.700H31.800V12.900H27.600V11H19.300L14.5 13.600L13.5 8Z" fill="#a8a8a8"/></svg>
<div style="left:2880.7px;top:15px;width:20.4px;height:6.4px;background:#a8a8a8;"></div>
<svg style="left:2949px;top:8.2px;" width="20" height="20" viewBox="0 0 20 20"><path d="M5.5 5.500V1.200H18.800V14.500H14.5" fill="none" stroke="#a8a8a8" stroke-width="2.4"/><rect x="1.2" y="6.7" width="13.3" height="12.1" fill="none" stroke="#a8a8a8" stroke-width="2.4"/><rect x="0" y="5.5" width="15.7" height="3.6" fill="#a8a8a8"/></svg>
<svg style="left:3017px;top:10px;" width="20" height="16" viewBox="0 0 20 16"><path d="M0.5 0L19.5 16M19.5 0L0.5 16" stroke="#b0b0b0" stroke-width="3" fill="none"/></svg>
<svg style="left:1244px;top:191px;" width="36" height="30" viewBox="0 0 36 30"><g fill="none" stroke="#d2d2d2" stroke-width="2.8" stroke-linecap="round" stroke-linejoin="round"><rect x="1.5" y="1.5" width="33" height="27" rx="5"/><rect x="8" y="8" width="20" height="14" rx="2"/></g></svg>
<svg style="left:1465px;top:190px;" width="28" height="30" viewBox="0 0 28 30"><g fill="none" stroke="#d2d2d2" stroke-width="2.8" stroke-linecap="round" stroke-linejoin="round"><path d="M3 28V14A11 11 0 0 1 25 14V28"/></g></svg>
<svg style="left:1669px;top:186.5px;" width="54" height="50" viewBox="0 0 54 50"><g fill="none" stroke="#e8e8e8" stroke-width="2.8" stroke-linecap="round" stroke-linejoin="round"><path d="M6 17A22 22 0 1 1 10 40"/><path d="M2.5 5V17.5H15"/></g></svg>
<div style="left:925px;top:204px;width:1192px;height:1393px;border:4px solid #007acc;background:#2d2d30;"></div>
<span style="left:1005.3px;top:227.2px;font-size:21.5px;letter-spacing:0.68px;color:#f1f1f1;">#6BZ5@CME</span>
<span style="left:1197.6px;top:227.2px;font-size:21.5px;letter-spacing:1.44px;color:#f1f1f1;">Qty: N/A</span>
<span style="left:1449.0px;top:227.2px;font-size:21.5px;letter-spacing:1.29px;color:#f1f1f1;">Smart DOM</span>
<svg style="left:0px;top:0px;" width="3036" height="1800" viewBox="0 0 3036 1800"><path d="M1193.6 987.5 C1197 975 1200 967 1203.6 959.2 C1209 947 1214 938 1220 930.1 C1227 921 1233 916 1240 911.9 C1247 907.5 1254 905 1260 902.8 C1268 899.5 1275 895.5 1281.9 890.1 C1289 884.5 1297 875 1303.7 866.4 C1311 857 1319 843 1325.5 831.9 C1332 821 1338 809 1343.7 799.1 C1350 788 1356 780 1361.9 771.8 C1368 763.5 1374 758 1380.1 754.6 C1386 751 1392 748.2 1398.3 748.2 C1404.5 748.2 1411 750 1416.5 753.6 C1423 758 1429 765.5 1434.7 773.7 C1441 782.5 1447 792.5 1452.9 801 C1459 810 1465 818 1471.1 824.6 C1477 831.5 1483 837.5 1489.3 842.8 C1500 850 1512 850 1524.5 849.4 C1545 852 1560 856.5 1575.4 856.2 C1587 856 1598 852.5 1609.4 849.4 C1627 844.5 1643 838 1660.3 832.4 C1677 826.5 1695 818 1711.3 813.8 C1723 810.8 1734 809.8 1745.2 810.4 C1757 811 1769 814 1779.2 822.3 C1791 832 1800 847 1806.4 863 C1813 879.5 1818.5 898 1823.4 917.3 C1828 935 1832 953 1836.9 968.3 C1840 977.5 1843.5 983.5 1848.8 987.5 Z" fill="#464a4e"/><path d="M1240 987.5 C1262 960 1282 937 1303.7 933.7 C1311 932.6 1318 931.9 1325.5 931 C1331.5 930.2 1338 929.1 1343.7 927.4 C1350 925.5 1356 922.6 1361.9 919.2 C1368 915.6 1374 910.3 1380.1 904.6 C1386 899 1392 895 1398.3 890.1 C1404.5 885.2 1410.5 880.3 1416.5 875.5 C1422.5 870.7 1428.5 866.6 1434.7 862.8 C1440.7 859.1 1446.8 856.2 1452.9 853.7 C1459 851.2 1465 849 1471.1 847.3 C1477 845.7 1483 844.9 1489.3 844.6 C1502 844 1517 845 1541.5 849.4 C1553 851.5 1564 857.5 1575.4 863 C1587 868.6 1598 876.5 1609.4 876.6 C1621 876.7 1632 871 1643.4 866.4 C1654 862 1666 855 1677.3 854.5 C1686 854.1 1696 855.5 1704.5 859.6 C1716 865 1727 874 1738.4 880 C1750 886 1762 887 1772.4 891.9 C1781 896 1790 902 1796.2 910.5 C1804 921 1810.5 932.5 1816.5 944.5 C1822.5 956.5 1827.5 966.5 1833.5 975 C1837.5 980.7 1842 985 1847.1 987.5 Z" fill="#595d60"/><path d="M1193.6 987.5 C1196.5 978 1199.5 971.5 1203.6 964.7 C1207.5 958.2 1211.5 953 1216.4 948.3 C1222 943 1228 938.8 1234.6 935.6 C1240.5 932.8 1246.5 931.1 1252.8 930.1 C1258.8 929.1 1265 928.6 1271 928.7 C1277 928.8 1283 929.7 1289.2 931 C1295.3 932.3 1301 934.5 1307.3 936.5 C1313.3 938.5 1319.3 941 1325.5 942.8 C1331.5 944.5 1337.5 945.8 1343.7 945.6 C1349.8 945.4 1355.8 944.5 1361.9 942.8 C1368 941.1 1374 938.2 1380.1 935.6 C1386.1 933 1392.2 930.1 1398.3 927.4 C1404.3 924.7 1410.3 921.8 1416.5 919.2 C1422.5 916.7 1428.5 914.6 1434.7 912.8 C1440.7 911.1 1446.8 909.4 1452.9 908.3 C1459 907.2 1465 906.5 1471.1 906.5 C1477 906.5 1483 906.5 1489.3 906.8 C1495.3 907.1 1501.4 908.2 1507.5 909.2 C1513 910.1 1519 911 1524.5 912.2 C1541.5 916 1558 922 1575.4 927.5 C1598 934.7 1620 943.5 1643.4 951.3 C1666 958.8 1688 963.5 1711.3 968.3 C1734 973 1756 975.5 1779.2 978.5 C1802 981.5 1824 985 1847 987.5 Z" fill="#6c7073"/><g transform="translate(1524.9 856.2) rotate(-45)" fill="none" stroke="#a1a6ab" stroke-width="11" stroke-linecap="round" stroke-linejoin="round"><path d="M-23.7 -40V40"/><path d="M-23.7 -23.5H-54.2A19 19 0 0 0 -73.2 -4.5V4.5A19 19 0 0 0 -54.2 23.5H-23.7"/><path d="M-73.2 0H-102"/><path d="M-23.7 -14H-2M-23.7 14H-2"/><path d="M23.7 -40V40"/><path d="M23.7 -23.5H54.2A19 19 0 0 1 73.2 -4.5V4.5A19 19 0 0 1 54.2 23.5H23.7"/><path d="M73.2 0H102"/></g><polygon points="1412.5,1162 1315,1213.8 1346.5,1237.2 1199.3,1445.5 1215.7,1457 1364,1249 1395.4,1271.3" fill="#e51c1e"/></svg>
<span style="left:1179.3px;top:1015.1px;font-size:33px;letter-spacing:-0.52px;color:#a5a5a4;">To display data, please connect a quote provider.</span>
<div style="left:1329.5px;top:1071.5px;width:391.5px;height:67px;border-radius:9px;background:#3e3e47"></div>
<div style="left:1331px;top:1073px;width:388.5px;height:64px;border-radius:7.5px;background:#007acc"></div>
<span style="left:1363.0px;top:1095.5px;font-size:23px;letter-spacing:0.49px;color:#ffffff;">Go to the connections settings</span>
<svg style="left:1330.6px;top:222px;" width="29" height="29" viewBox="0 0 29 29"><g fill="none" stroke="#cfcfcf" stroke-width="1.9" stroke-linecap="round" stroke-linejoin="round"><path d="M0.6 14.2Q3.5 8.5 7.2 5"/><path d="M12 4.7Q21.5 3.2 28.4 14.2Q27.4 16.9 25.2 18.6"/><path d="M0.6 14.2Q6.5 25 14.4 24.6Q18 24.4 21 22"/><path d="M12.4 10.6A4.2 4.2 0 0 0 16.4 18.4"/><path d="M0.6 0.6L28.4 28.6" stroke="#dde4e8"/></g></svg>
<svg style="left:936.5px;top:222px;" width="32.4" height="28.8" viewBox="0 0 32.4 28.8"><polygon points="0,14.4 8.1,0 24.3,0 32.4,14.4 24.3,28.8 8.1,28.8" fill="#ececec"/><polygon points="9.6,3.4 22.3,3.4 29.2,14.4 22.8,25 9.8,25 8.1,23.3 16.05,8.65 7.2,8.65" fill="#2d2d30"/><polygon points="20.6,12 15.6,21.1 24.3,21.6 25.9,19" fill="#ececec"/></svg>
<svg style="left:979.2px;top:222px;" width="16" height="28" viewBox="0 0 16 28"><g fill="none" stroke="#e6e6e6" stroke-width="2" stroke-linecap="round" stroke-linejoin="round"><rect x="1" y="1.1" width="14" height="25.6" rx="4.5"/></g></svg>
<svg style="left:1153.5px;top:223px;" width="28" height="27" viewBox="0 0 28 27"><g fill="none" stroke="#cfcfcf" stroke-width="2" stroke-linecap="round" stroke-linejoin="round"><circle cx="12.4" cy="12" r="10.7"/><path d="M20 19.800L26 25.7"/></g></svg>
<svg style="left:1675.6px;top:226.5px;" width="19" height="19" viewBox="0 0 19 19"><g fill="none" stroke="#6a6a6a" stroke-width="1.8" stroke-linecap="round" stroke-linejoin="round"><path d="M18.2 0.800L10.8 8.200M10.8 2.500V8.200H16.500M0.8 18.200L8.2 10.800M8.2 16.500V10.800H2.5"/></g></svg>
<svg style="left:1713px;top:233px;" width="16" height="8.199999999999989" viewBox="0 0 16 8.199999999999989"><path d="M0 0H16L8.0 8.199999999999989Z" fill="#6a6a6a"/></svg>
<svg style="left:1742.7px;top:222px;" width="29" height="29" viewBox="0 0 29 29"><g fill="none" stroke="#d8d8d8" stroke-width="2" stroke-linecap="round" stroke-linejoin="round"><path d="M19.3 6.500V5A4 4 0 0 0 15.3 1H5A4 4 0 0 0 1 5V15.500A4 4 0 0 0 5 19.5"/><rect x="8.8" y="9.2" width="18.7" height="18.2" rx="4"/></g></svg>
<svg style="left:1799.5px;top:222px;" width="19" height="28" viewBox="0 0 19 28"><rect x="0.5" y="11.9" width="17.2" height="15.1" rx="3.5" fill="#f1f1f1"/><path d="M3 8.500V7.200A5.5 5.5 0 0 1 14 7.200V12" fill="none" stroke="#f1f1f1" stroke-width="2.2"/><circle cx="9.1" cy="18" r="2.2" fill="#2d2d30"/><rect x="8.1" y="18.5" width="2" height="5" fill="#2d2d30"/></svg>
<svg style="left:1836.8px;top:233px;" width="16.200000000000045" height="8.199999999999989" viewBox="0 0 16.200000000000045 8.199999999999989"><path d="M0 0H16.200000000000045L8.100000000000023 8.199999999999989Z" fill="#f1f1f1"/></svg>
<svg style="left:1866.8px;top:222.6px;" width="28.5" height="26.8" viewBox="0 0 28.5 26.8"><g fill="none" stroke="#6a6a6a" stroke-width="2" stroke-linecap="round" stroke-linejoin="round"><polygon points="14.25,1.00 14.94,1.02 15.63,1.07 16.31,1.15 16.94,1.50 17.32,2.62 17.59,3.73 17.78,4.75 17.97,5.54 18.40,5.74 18.82,5.95 19.23,6.19 19.63,6.44 20.45,6.20 21.48,5.84 22.65,5.51 23.86,5.26 24.50,5.60 24.92,6.11 25.31,6.65 25.67,7.20 26.00,7.77 26.30,8.36 26.56,8.96 26.55,9.64 25.72,10.51 24.83,11.29 23.98,11.95 23.35,12.50 23.38,12.95 23.40,13.40 23.38,13.85 23.35,14.30 23.98,14.85 24.83,15.51 25.72,16.29 26.55,17.16 26.56,17.84 26.30,18.44 26.00,19.03 25.67,19.60 25.31,20.15 24.92,20.69 24.50,21.20 23.86,21.54 22.65,21.29 21.48,20.96 20.45,20.60 19.63,20.36 19.23,20.61 18.82,20.85 18.40,21.06 17.97,21.26 17.78,22.05 17.59,23.07 17.32,24.18 16.94,25.30 16.31,25.65 15.63,25.73 14.94,25.78 14.25,25.80 13.56,25.78 12.87,25.73 12.19,25.65 11.56,25.30 11.18,24.18 10.91,23.07 10.72,22.05 10.53,21.26 10.10,21.06 9.68,20.85 9.27,20.61 8.87,20.36 8.05,20.60 7.02,20.96 5.85,21.29 4.64,21.54 4.00,21.20 3.58,20.69 3.19,20.15 2.83,19.60 2.50,19.03 2.20,18.44 1.94,17.84 1.95,17.16 2.78,16.29 3.67,15.51 4.52,14.85 5.15,14.30 5.12,13.85 5.10,13.40 5.12,12.95 5.15,12.50 4.52,11.95 3.67,11.29 2.78,10.51 1.95,9.64 1.94,8.96 2.20,8.36 2.50,7.77 2.83,7.20 3.19,6.65 3.58,6.11 4.00,5.60 4.64,5.26 5.85,5.51 7.02,5.84 8.05,6.20 8.87,6.44 9.27,6.19 9.68,5.95 10.10,5.74 10.53,5.54 10.72,4.75 10.91,3.73 11.18,2.62 11.56,1.50 12.19,1.15 12.87,1.07 13.56,1.02"/><circle cx="14.25" cy="13.4" r="5.5"/></g></svg>
<svg style="left:581.3px;top:1772px;" width="29" height="27" viewBox="0 0 29 27"><g fill="none" stroke="#d4d4d4" stroke-width="2" stroke-linecap="round" stroke-linejoin="round"><polygon points="14.50,1.00 15.20,1.02 15.90,1.07 16.60,1.15 17.24,1.50 17.63,2.62 17.91,3.74 18.11,4.76 18.30,5.55 18.74,5.75 19.17,5.97 19.59,6.20 19.99,6.46 20.83,6.22 21.88,5.87 23.06,5.53 24.29,5.29 24.93,5.63 25.36,6.15 25.76,6.69 26.13,7.25 26.46,7.83 26.77,8.42 27.03,9.02 27.03,9.71 26.19,10.58 25.29,11.37 24.44,12.03 23.79,12.59 23.83,13.04 23.84,13.50 23.83,13.96 23.79,14.41 24.44,14.97 25.29,15.63 26.19,16.42 27.03,17.29 27.03,17.98 26.77,18.58 26.46,19.17 26.13,19.75 25.76,20.31 25.36,20.85 24.93,21.37 24.29,21.71 23.06,21.47 21.88,21.13 20.83,20.78 19.99,20.54 19.59,20.80 19.17,21.03 18.74,21.25 18.30,21.45 18.11,22.24 17.91,23.26 17.63,24.38 17.24,25.50 16.60,25.85 15.90,25.93 15.20,25.98 14.50,26.00 13.80,25.98 13.10,25.93 12.40,25.85 11.76,25.50 11.37,24.38 11.09,23.26 10.89,22.24 10.70,21.45 10.26,21.25 9.83,21.03 9.41,20.80 9.01,20.54 8.17,20.78 7.12,21.13 5.94,21.47 4.71,21.71 4.07,21.37 3.64,20.85 3.24,20.31 2.87,19.75 2.54,19.17 2.23,18.58 1.97,17.98 1.97,17.29 2.81,16.42 3.71,15.63 4.56,14.97 5.21,14.41 5.17,13.96 5.16,13.50 5.17,13.04 5.21,12.59 4.56,12.03 3.71,11.37 2.81,10.58 1.97,9.71 1.97,9.02 2.23,8.42 2.54,7.83 2.87,7.25 3.24,6.69 3.64,6.15 4.07,5.63 4.71,5.29 5.94,5.53 7.12,5.87 8.17,6.22 9.01,6.46 9.41,6.20 9.83,5.97 10.26,5.75 10.70,5.55 10.89,4.76 11.09,3.74 11.37,2.62 11.76,1.50 12.40,1.15 13.10,1.07 13.80,1.02"/><circle cx="14.5" cy="13.5" r="5.5"/></g></svg>
<svg style="left:1914.5px;top:229.8px;" width="31.8" height="13.6" viewBox="0 0 31.8 13.6"><path d="M0 6.800L13.5 5.600L14.5 0L19.3 2.600H27.600V0.700H31.800V12.900H27.600V11H19.300L14.5 13.600L13.5 8Z" fill="#f1f1f1"/></svg>
<div style="left:1980.7px;top:233px;width:20.6px;height:6.4px;background:#ababab;"></div>
<svg style="left:2032.7px;top:226px;" width="20.6" height="19.8" viewBox="0 0 20.6 19.8"><path d="M0 0H20.600V19.800H0Z M2 5.200V17.800H18.600V5.200Z" fill="#ababab" fill-rule="evenodd"/></svg>
<svg style="left:2085px;top:227.8px;" width="19.8" height="16.2" viewBox="0 0 19.8 16.2"><path d="M0.8 0L19 16.200M19 0L0.8 16.2" stroke="#b9b9b9" stroke-width="2.8" fill="none"/></svg>
</body></html>
